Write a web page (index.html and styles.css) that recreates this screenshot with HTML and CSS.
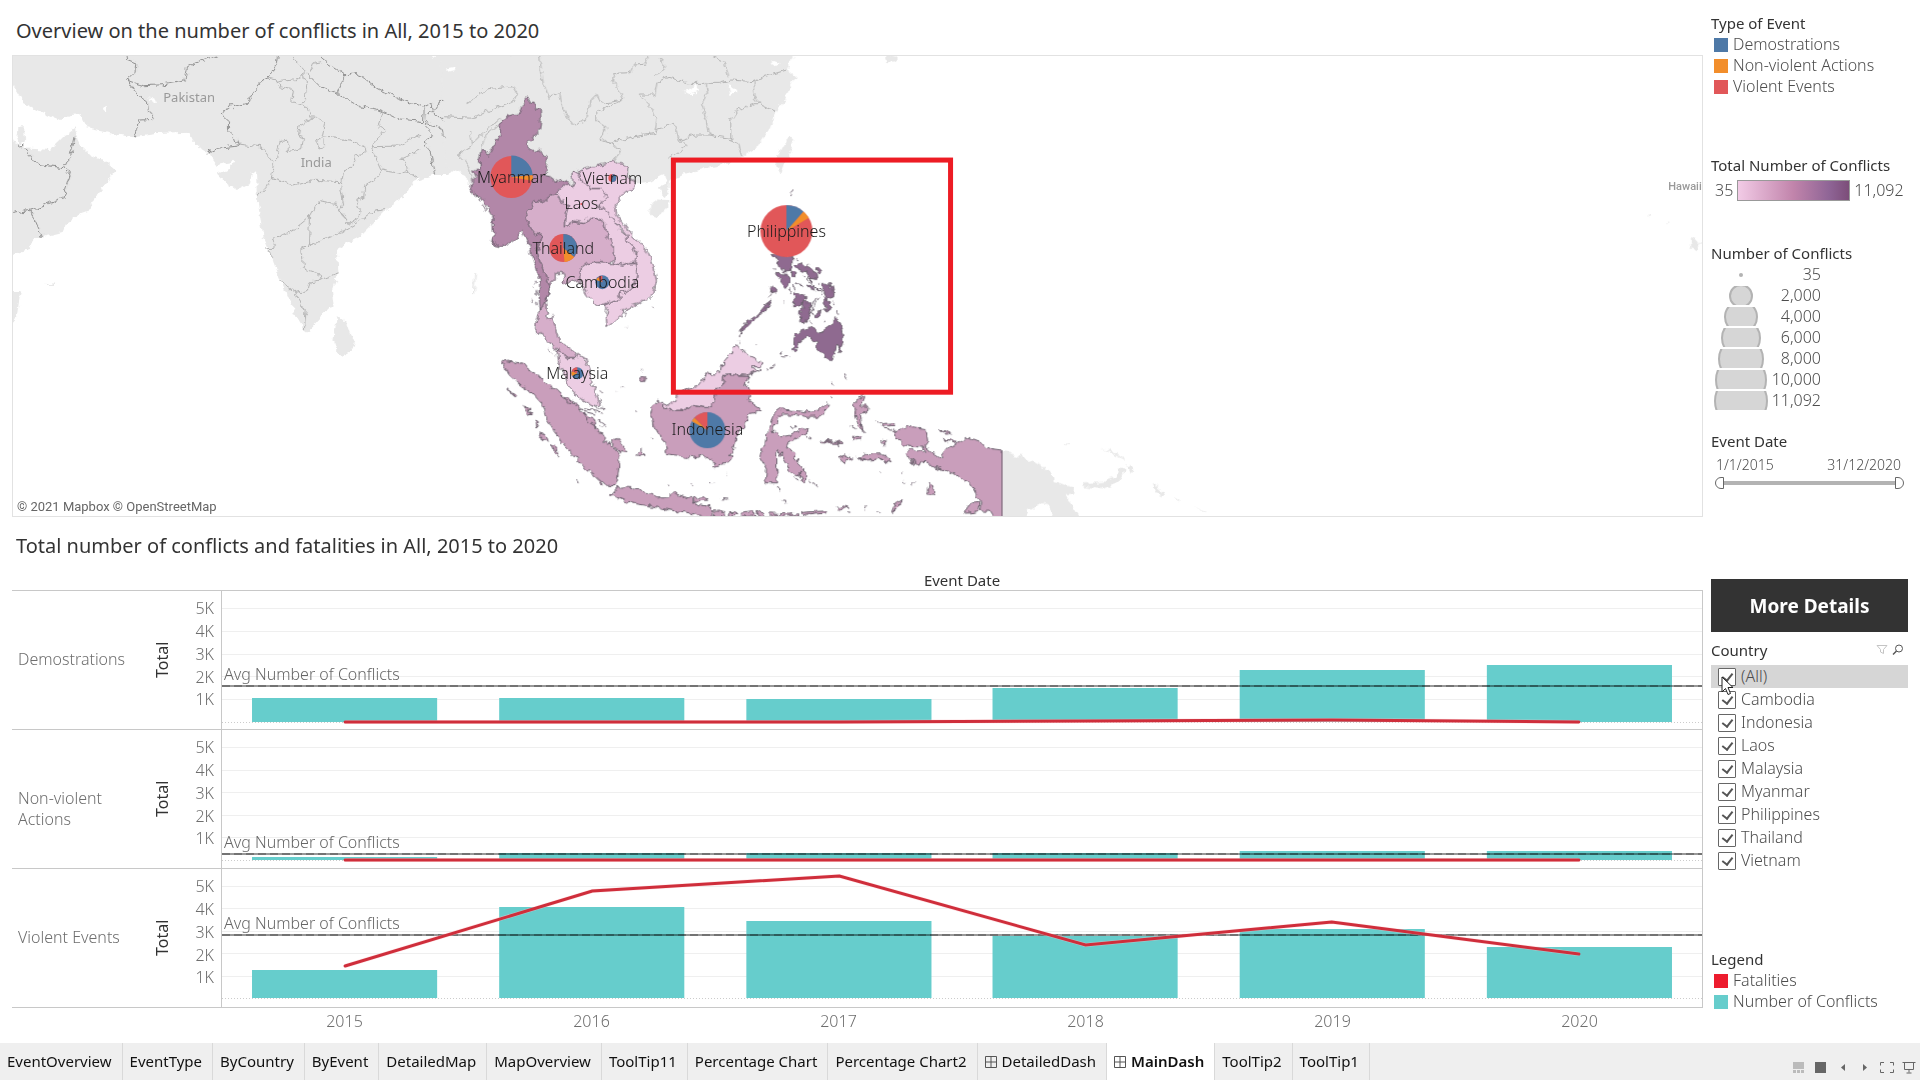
FILE: index.html
```html
<!DOCTYPE html>
<html lang="en">
<head>
<meta charset="utf-8">
<title>MainDash</title>
<link rel="stylesheet" href="styles.css">
</head>

<body>
<main class="dashboard">
  <div class="views">
    <h1>Overview on the number of conflicts in All, 2015 to 2020</h1>

    <!-- map, drawn in dashboard coordinates -->
    <svg class="map" viewBox="13 56 1688 460">
      <defs>
        <filter id="coast" filterUnits="userSpaceOnUse" x="0" y="45" width="1720" height="490" color-interpolation-filters="sRGB">
          <feTurbulence type="fractalNoise" baseFrequency="0.16" numOctaves="2" seed="4"/>
          <feDisplacementMap in="SourceGraphic" scale="7" xChannelSelector="R" yChannelSelector="G"/>
        </filter>
        <clipPath id="papua-border"><rect x="0" y="0" width="1002" height="600"/></clipPath>
      </defs>

      <g filter="url(#coast)">
        <!-- west: Iran, Arabia, India -->
        <g class="land" transform="translate(0 40) scale(.3333)">
          <path d="M20,30 L20,105 37,135 70,190 110,210 180,240 215,222 240,220 262,265 330,280 400,292 470,282 565,278 575,300 600,325 625,340 650,375 700,365 685,385 650,400 680,430 710,450 750,430 755,395 768,398 770,470 790,590 815,650 845,730 890,830 918,877 945,850 985,805 1003,800 998,750 1015,700 1010,630 1040,610 1080,590 1160,510 1220,460 1240,425 1300,405 1340,405 1380,375 1405,430 1450,480 1450,30Z"/>
          <path d="M20,300 L60,312 80,325 150,330 190,290 225,265 235,310 270,345 310,360 345,390 300,455 275,490 272,510 230,525 200,550 190,575 130,590 100,600 90,625 20,650Z"/>
          <path d="M55,265 L72,262 75,300 60,315 52,295ZM20,753 L62,753 50,830 20,870ZM137,730h28v5h-28Z"/>
          <path d="M1010,825 L1040,850 1050,880 1065,900 1055,935 1030,948 1010,935 1000,900Z"/>
          <path class="water" d="M1340,83l25,-5 2,10 -24,5ZM447,172l18,8 -8,10ZM310,205l14,-4 -8,18ZM1290,45l20,0 -8,9Z"/>
        </g>
        <g class="borders" transform="translate(0 40) scale(.3333)">
          <path class="nation" d="M378,45 L380,58 410,70 408,95 380,121 430,137 490,134 555,122 562,80 600,62 650,48M380,121 L410,165 442,185 445,215 460,222 455,238 420,240 410,262 403,292M832,45 L828,75 805,115 790,118 760,155 740,190 700,200 690,190 663,225 685,245 685,270 705,290 715,318 650,325 620,340M963,50 L1000,80 1035,105 1012,160 1080,200 1140,212 1200,240 1270,248 1272,200 1230,188 1180,170 1130,145 1080,105 1060,98 1040,110M920,100 L960,140 1010,160M1272,200 L1293,190 1297,215 1275,222M1300,215 L1320,185 1350,180 1385,190 1402,210 1395,232 1320,235ZM1275,250 L1325,262 1330,290 1405,294 1405,262M1270,255 L1300,285 1270,310 1290,335 1303,403M1405,295 L1405,330 1378,335 1378,360 1395,370 1400,345 1412,345 1415,400"/>
          <path class="nation" d="M75,325 L110,373 193,383 215,335 225,290M193,383 L210,405 188,475 92,510 37,520M92,510 L128,593M50,310l8,8 12,-2"/>
          <path d="M715,312 L780,320 820,370 812,410 800,440 772,470M812,415 L880,435 930,420 1025,425M825,360 L840,305 862,300 865,335 905,325 910,290 895,285 900,255 945,232 975,245 965,290 1050,300 1095,320 1098,340 1060,345 1065,365 1030,400 1022,440 1030,495 1018,510 1048,552 1075,535 1080,510 1070,480 1088,475 1090,440 1130,415 1142,390 1115,330 1120,310 1152,270 1135,255 1150,215M965,290 L950,300 955,325 970,320 968,300M1115,320 L1200,318 1230,300 1260,285M1142,390 L1200,400 1215,390 1252,418M1260,330 L1205,355 1230,400M810,115 L830,120 840,140 880,150 875,185 920,200 930,230 945,232M910,95 L920,130 915,180 905,190M830,125 L880,120 905,110 915,90 875,50M930,95 L940,70 965,65"/>
          <path d="M1160,508 L1115,515 1075,545 1018,580 925,617 928,530 955,482 1005,490 1030,530 1050,550M928,530 L880,570 820,598 818,625 800,625 818,650M925,617 L905,625 910,685 955,700 960,720 930,725 925,750 890,760 840,722M960,718 L1015,698M890,760 L905,800 918,810 912,872M1320,235 L1345,265 1410,262 1425,250M1402,210 L1440,170"/>
        </g>

        <!-- east: China, Taiwan, Hainan -->
        <g class="land" transform="translate(400 40) scale(.4464 .3333)">
          <path d="M90,30 L100,380 165,420 250,480 400,450 480,420 530,430 560,425 590,405 595,425 580,445 590,470 600,455 602,425 640,400 680,385 720,375 765,350 800,320 825,270 840,220 860,180 870,150 885,110 865,90 880,50 870,30Z"/>
          <path d="M870,290 L880,295 868,350 852,402 840,360ZM560,495 L575,478 600,480 600,500 575,535 558,520ZM1085,45 L1112,50 1105,68 1088,66Z"/>
          <path class="water" d="M634,155l15,-4 14,-18 4,18 -18,12ZM735,135l14,8 6,14 -16,8ZM835,62l16,8 -6,12 -14,-8ZM103,85l20,-5 2,10 -20,5ZM70,45h15l-6,10Z"/>
        </g>
        <g class="borders" transform="translate(400 40) scale(.4464 .3333)">
          <path d="M312,50 L320,130 332,175 355,160 362,205 390,255 415,240 425,185 440,165 450,190 500,180 490,145 475,125 480,100 515,98 525,75 550,72 555,50M500,180 L440,215 440,240 460,260 450,290 470,310 525,290 570,280 575,235 560,200 535,165 570,165 575,125 600,112 650,130 685,130 688,160 675,190 685,240 690,285 740,295M570,280 L575,265 610,250 620,275 625,300 660,285 690,285M625,300 L640,320 600,355M740,300 L740,240 755,210 800,190 840,215M690,130 L715,130 740,120 790,125 815,110 865,90M580,50 L592,80 570,110M700,50 L725,65 735,110M790,125 L792,170 805,190M735,300 L755,310 765,350M460,260 L450,300 470,310 495,330 480,360M150,190 L190,150 250,140 262,165 250,185 200,210 165,235 100,230M232,240 L190,290 180,330M225,235 L160,310M155,275 L160,320 130,345 150,370 162,420M245,50 l20,-5"/>
        </g>

        <!-- Papua New Guinea and the Solomons -->
        <g class="land" transform="translate(960 370) scale(.3333)">
          <path d="M100,240 L120,240 200,265 275,305 280,335 340,352 338,372 318,375 335,410 360,450 290,450 260,405 240,400 205,420 190,450 100,450ZM365,340 L430,335 468,320 472,295 495,297 480,330 430,358 365,347ZM420,234 L450,242 490,265 488,268 450,248ZM500,283l16,4 2,18 -8,2ZM575,337 L610,368 605,378 585,365ZM635,375l26,18 -6,2ZM700,405l40,22 -6,1ZM310,220h20v4h-20Z"/>
        </g>
        <path class="land" d="M1648,213l3,2 -3,1ZM1665,220l3,2 -2,1ZM1690,237l6,2 4,5 -5,6 -5,-2ZM474,273l2,0 -2,20 -1,0Z"/>

        <!-- mainland countries -->
        <g class="country" transform="translate(440 80) scale(.3333)">
          <path class="myanmar" d="M262,50 L272,68 280,65 285,82 300,88 302,120 298,150 280,170 262,185 265,205 278,215 300,208 305,225 320,230 318,248 327,275 310,285 330,290 345,302 360,306 378,298 380,308 362,325 345,345 325,350 305,368 282,362 275,380 258,400 262,420 270,440 285,460 305,470 300,490 290,510 298,545 315,580 328,620 325,640 300,690 296,640 300,600 285,560 272,520 268,490 245,455 232,470 215,485 195,498 178,500 152,495 160,470 158,440 158,410 140,380 130,360 105,345 88,322 92,305 108,290 100,275 120,265 118,230 122,212 145,225 152,215 165,190 180,165 180,125 205,108 240,98 250,75 250,60Z"/>
          <path class="thailand" d="M345,345 L358,345 368,370 385,375 378,400 375,440 400,425 430,430 445,412 470,415 495,430 500,470 522,495 522,540 505,550 470,547 440,550 420,565 420,600 415,612 400,600 372,608 370,580 345,580 345,600 335,605 325,640 315,665 318,690 325,718 335,715 350,760 355,785 385,800 405,815 408,835 380,835 375,820 350,810 330,790 310,765 285,755 288,720 300,690 325,640 328,620 315,580 298,545 290,510 300,490 305,470 285,460 270,440 262,420 258,400 275,380 282,362 305,368 325,350Z"/>
          <path class="pale" d="M395,272 L405,275 420,285 420,300 440,310 450,325 480,325 495,340 500,355 485,370 470,378 495,390 510,405 525,425 540,450 560,465 560,485 585,510 590,545 570,548 545,555 525,550 522,540 522,495 500,470 495,430 470,415 445,412 430,430 400,425 375,440 378,400 385,375 368,370 358,345 345,345 362,325 380,308 400,318 395,290Z"/>
          <path class="pale" d="M518,240 L530,250 550,252 562,262 560,290 590,310 580,325 555,335 540,350 525,375 528,400 548,430 570,460 595,485 625,520 640,560 648,600 640,640 620,660 570,680 550,690 545,705 520,725 500,742 498,705 503,685 490,675 515,665 540,660 535,640 560,632 585,610 590,580 585,545 590,515 560,485 560,465 525,425 495,390 470,378 485,370 500,355 495,340 480,325 450,325 440,310 420,300 415,270 440,265 465,258 500,250Z"/>
          <path class="pale" d="M420,565 L440,550 470,547 505,550 522,550 545,555 570,548 585,547 590,580 585,610 560,632 535,640 540,660 515,665 490,675 470,675 455,660 440,645 430,620 418,595Z"/>
          <path class="pale" d="M350,810 L375,820 380,835 408,835 412,822 440,840 450,870 455,910 470,945 480,975 460,980 420,955 385,920 370,880 355,845Z"/>
          <path d="M285,600l3,12M278,620l4,6M290,630l2,14M276,655l3,10M288,665l3,10M110,350l6,12M128,372l10,20M156,480l4,14M168,484l2,14M186,490l3,10M335,705l4,10M545,690l8,12M552,705l6,4M320,808l6,4M605,870l3,2M635,680l2,3M558,740l2,2M332,815l4,4"/>
        </g>
      </g>

      <!-- Indonesia and Borneo, cut straight at the Papua border -->
      <g clip-path="url(#papua-border)">
        <g filter="url(#coast)">
          <g class="country" transform="translate(470 320) scale(.3571 .3333)">
            <path class="indonesia" d="M88,120 L120,125 150,130 165,150 180,155 210,190 240,210 265,235 300,255 310,275 345,300 350,330 375,340 375,365 400,375 418,405 415,450 410,497 375,495 350,470 320,445 290,405 265,380 245,345 215,300 200,250 170,215 140,195 105,160Z"/>
            <path class="indonesia" d="M395,525 L415,500 450,502 490,515 520,530 550,530 565,515 600,530 620,535 630,552 675,560 678,587 640,585 600,575 560,570 520,560 460,550 430,540 405,530ZM625,532l36,-2 2,10 -36,3ZM680,572l30,2 2,12 -30,1ZM725,578l20,-2 4,10 -22,2ZM758,576l30,-4 8,12 -36,4ZM800,574l20,4 4,10 -20,0ZM835,578l60,4 20,-4 2,9 -80,1ZM930,576l70,-4 -2,6 -66,8ZM1022,565l25,-8 10,4 -30,10Z"/>
            <path class="indonesia" d="M525,240 L540,258 560,270 600,270 620,255 660,262 685,250 690,210 710,190 712,165 775,165 770,190 778,205 785,225 780,245 815,270 795,278 775,280 768,320 745,345 740,375 735,400 720,425 682,440 680,418 640,405 600,415 575,405 550,400 545,365 530,345 515,320 508,280 512,255Z"/>
            <path class="indonesia" d="M842,310 L850,280 870,265 900,270 940,275 975,270 1005,248 1000,265 980,290 940,292 900,285 860,285 848,330 870,350 895,345 930,325 950,330 920,350 890,365 885,380 905,395 920,430 935,450 920,465 895,455 885,430 870,405 862,390 858,400 858,440 860,488 828,488 832,450 810,410 815,385 828,375 830,345 838,330ZM920,460l18,-15 4,25 -12,18Z"/>
            <path class="indonesia" d="M1075,245 L1105,225 1100,245 1090,258 1112,258 1108,275 1092,280 1095,310 1100,335 1085,310 1078,280ZM1088,415 L1110,400 1160,402 1178,428 1150,415 1100,422ZM1030,412l20,-8 18,10 -20,16ZM980,360l58,4 2,6 -58,-2ZM1070,348l22,2 0,10 -20,-2ZM1278,525l4,-38 14,10 2,28ZM1145,362l20,4 -8,8ZM1155,310l34,-2 0,8 -30,2ZM1180,578l10,-28 22,-12 -20,30ZM1310,328l34,12 -10,2ZM1320,358l40,2 -4,6Z"/>
            <path class="indonesia" d="M1180,335 L1225,318 1275,325 1280,365 1270,378 1300,405 1315,415 1335,385 1390,352 1430,368 1455,385 1490,390 1520,390 1520,600 1470,600 1450,570 1425,570 1430,545 1415,520 1400,490 1370,470 1320,450 1290,435 1265,420 1255,440 1240,435 1235,415 1215,400 1235,385 1275,400 1265,378 1215,375 1195,350ZM1385,580 L1395,555 1425,545 1420,575Z"/>
            <path class="indonesia" d="M105,210l24,16 -4,4ZM148,258l12,2 12,22 -8,4ZM184,300l8,6 -6,14ZM192,335l12,4 12,22 -8,4ZM228,372l10,4 10,34 -12,-14ZM395,365l20,-10 25,42 -22,-2ZM465,400l12,-10 10,12 -14,8ZM320,285l25,10 4,22 -16,-10ZM265,232l18,4 8,12 -16,-2ZM478,172l10,2 -2,10 -8,-4Z"/>
            <path class="pale" d="M525,240 L555,255 575,248 580,220 600,210 635,200 655,170 665,155 680,170 690,150 700,155 705,130 725,105 745,75 765,90 775,105 822,130 810,140 790,140 805,155 775,165 735,163 712,165 710,190 690,210 685,250 660,262 620,255 600,270 560,270 540,258Z"/>
            <path d="M300,262l70,14M310,272l40,10M355,262l20,4M360,300l20,16M362,320l18,2M365,215l4,2M408,208l4,2M425,197l4,3M462,272l4,2M505,357l6,2M300,482l6,3M553,495l4,1M620,494l4,2M674,487l4,1M716,460l3,2M895,320l22,-4M935,345l20,12M905,470l14,10M950,480l20,20M860,500l2,14M865,540l20,6M1010,187l4,2M1048,160l4,20M1010,230l2,3M1130,305l20,6M1065,315l14,8M1080,410l30,12M700,535l20,2M1050,575l14,1M1105,565l4,-10M1140,575l8,2M1235,495l10,-10M1148,452l3,3M1208,450l2,8M1215,486l4,4M1160,325l22,2M1240,420l6,16M1302,435l14,4M775,170l6,16M770,188l10,8M985,365l44,0 2,16"/>
          </g>
        </g>
      </g>
      <path class="border_line" d="M1001.500,450V516"/>

      <!-- Philippines -->
      <g filter="url(#coast)">
        <g class="country" transform="translate(660 150) scale(.3333)">
          <path class="philippines" d="M335,310 L395,320 395,345 390,365 370,365 355,350 350,330ZM345,370 L380,372 388,395 378,412 365,400ZM405,345 L425,338 445,355 470,370 472,388 450,385 435,362 412,358ZM478,400 L510,398 520,440 500,448 490,425ZM490,440 L510,455 505,485 495,480ZM400,428 L440,440 425,465 400,470ZM430,455 L452,455 448,490 438,518 415,500 415,485 428,480ZM460,490 L485,482 480,497 462,500ZM400,590 L402,560 425,540 445,530 465,540 470,550 490,540 520,520 520,500 540,515 548,570 540,605 530,585 515,632 495,620 470,605 470,575 440,560 420,570 412,590ZM240,545 L255,520 290,495 315,465 335,450 325,470 300,490 275,515 250,540ZM330,410l14,2 -2,16 -10,4ZM393,366l12,4 -2,10 -8,-2ZM440,405l20,4 6,14 -16,-4ZM470,352l10,2 0,14 -12,-4ZM398,592l12,4 -4,8 -8,-2Z"/>
          <path d="M398,118l-3,6M396,130l4,8M399,160l3,2M402,322l12,4M342,355l4,4M425,375l60,55M440,380l50,50M475,440l-28,60M465,440l-20,50M402,395l20,8M400,405l6,20M385,415l4,12M415,400l10,10M525,480l12,14M518,455l6,10M445,350l6,-10M320,440l8,-8M335,425l4,6M240,550l-4,6M238,572l4,10M370,455l2,2M286,584l2,1M365,605l-10,6M362,620l20,-4M330,655l14,-10M320,655l-2,6M300,660l-12,8M557,668l4,10M556,688l4,-6M515,695l4,6M512,740l2,2M595,742l14,-10M425,500l-6,12M450,515l8,6M490,512l0,6"/>
        </g>
      </g>

      <!-- place names of the base map -->
      <text class="place" x="189" y="102">Pakistan</text>
      <text class="place" x="316" y="167">India</text>
      <text class="place small" x="1684" y="190">Hawaii</text>

      <!-- pies: r is half of the pie, the stroke fills it -->
      <g class="pie" transform="translate(511 177) rotate(-90)">
        <circle class="violent" r="21"/>
        <circle class="demo" r="11" stroke-width="21" pathLength="360" stroke-dasharray="85 360"/>
        <circle class="nonviolent" r="11" stroke-width="21" pathLength="360" stroke-dasharray="15 360" stroke-dashoffset="-85"/>
      </g>
      <g class="pie" transform="translate(563 248) rotate(-90)">
        <circle class="violent" r="14"/>
        <circle class="demo" r="7" stroke-width="14" pathLength="360" stroke-dasharray="130 360"/>
        <circle class="nonviolent" r="7" stroke-width="14" pathLength="360" stroke-dasharray="45 360" stroke-dashoffset="-130"/>
      </g>
      <g class="pie" transform="translate(602 282) rotate(-90)">
        <circle class="demo-fill" r="7"/>
        <circle class="nonviolent" r="3" stroke-width="7" pathLength="360" stroke-dasharray="30 360" stroke-dashoffset="-290"/>
        <circle class="red" r="3" stroke-width="7" pathLength="360" stroke-dasharray="40 360" stroke-dashoffset="-320"/>
      </g>
      <g class="pie" transform="translate(612 178) rotate(-90)">
        <circle class="violent" r="4"/>
        <circle class="demo" r="2" stroke-width="4" pathLength="360" stroke-dasharray="200 360"/>
      </g>
      <g class="pie" transform="translate(577 373) rotate(-90)">
        <circle class="demo-fill" r="6"/>
        <circle class="nonviolent" r="3" stroke-width="6" pathLength="360" stroke-dasharray="50 360" stroke-dashoffset="-240"/>
        <circle class="red" r="3" stroke-width="6" pathLength="360" stroke-dasharray="70 360" stroke-dashoffset="-290"/>
      </g>
      <g class="pie" transform="translate(707 430) rotate(-90)">
        <circle class="demo-fill" r="18"/>
        <circle class="nonviolent" r="9" stroke-width="18" pathLength="360" stroke-dasharray="14 360" stroke-dashoffset="-300"/>
        <circle class="red" r="9" stroke-width="18" pathLength="360" stroke-dasharray="46 360" stroke-dashoffset="-314"/>
      </g>
      <g class="pie" transform="translate(786 231) rotate(-90)">
        <circle class="violent" r="26"/>
        <circle class="demo" r="13" stroke-width="26" pathLength="360" stroke-dasharray="41 360"/>
        <circle class="nonviolent" r="13" stroke-width="26" pathLength="360" stroke-dasharray="18 360" stroke-dashoffset="-41"/>
      </g>
      <circle class="violent" cx="581" cy="204" r="1"/>

      <g class="names">
        <text x="511" y="183">Myanmar</text>
        <text x="612" y="184">Vietnam</text>
        <text x="581" y="209">Laos</text>
        <text x="563" y="254">Thailand</text>
        <text x="602" y="288">Cambodia</text>
        <text x="577" y="379">Malaysia</text>
        <text x="707" y="435">Indonesia</text>
        <text x="786" y="237">Philippines</text>
      </g>

      <rect class="highlight" x="673" y="160" width="277" height="232"/>
      <text class="credit" x="17" y="511">© 2021 Mapbox © OpenStreetMap</text>
    </svg>

    <h1 class="second">Total number of conflicts and fatalities in All, 2015 to 2020</h1>
    <h2 class="chart_title">Event Date</h2>

    <div class="chart">
      <div class="chart_row">
        <div class="row_name">Demostrations</div>
        <div class="row_total">Total</div>
        <div class="row_axis"><span>5K</span><span>4K</span><span>3K</span><span>2K</span><span>1K</span></div>
        <div class="plot">
          <svg viewBox="0 0 1479 138" preserveAspectRatio="none">
            <path class="gridline" d="M0,17.5H1481M0,40.5H1481M0,63.5H1481M0,85.5H1481M0,108.5H1481"/>
            <path class="zero" d="M0,131.5H1481"/>
            <path class="bar" d="M30,107h185v24h-185ZM277,107h185v24h-185ZM524,108h185v23h-185ZM770,97h185v34h-185ZM1017,79h185v52h-185ZM1264,74h185v57h-185Z"/>
            <path class="avg" d="M0,95H1481"/><path class="avg_dash" d="M0,95H1481"/>
            <polyline class="halo" points="123,131 370,131 617,131 863,130 1109,129 1356,131"/>
            <polyline class="fatal" points="123,131 370,131 617,131 863,130 1109,129 1356,131"/>
          </svg>
          <span class="avg_label" style="bottom: 44px">Avg Number of Conflicts</span>
        </div>
      </div>
      <div class="chart_row">
        <div class="row_name">Non-violent Actions</div>
        <div class="row_total">Total</div>
        <div class="row_axis"><span>5K</span><span>4K</span><span>3K</span><span>2K</span><span>1K</span></div>
        <div class="plot">
          <svg viewBox="0 0 1479 138" preserveAspectRatio="none">
            <path class="gridline" d="M0,17.5H1481M0,40.5H1481M0,62.5H1481M0,85.5H1481M0,107.5H1481"/>
            <path class="zero" d="M0,130.5H1481"/>
            <path class="bar" d="M30,127h185v3h-185ZM277,123h185v7h-185ZM524,123h185v7h-185ZM770,123h185v7h-185ZM1017,121h185v9h-185ZM1264,121h185v9h-185Z"/>
            <path class="avg" d="M0,124H1481"/><path class="avg_dash" d="M0,124H1481"/>
            <polyline class="halo" points="123,130 1356,130"/>
            <polyline class="fatal" points="123,130 1356,130"/>
          </svg>
          <span class="avg_label" style="bottom: 15px">Avg Number of Conflicts</span>
        </div>
      </div>
      <div class="chart_row">
        <div class="row_name">Violent Events</div>
        <div class="row_total">Total</div>
        <div class="row_axis"><span>5K</span><span>4K</span><span>3K</span><span>2K</span><span>1K</span></div>
        <div class="plot">
          <svg viewBox="0 0 1479 138" preserveAspectRatio="none">
            <path class="gridline" d="M0,17.5H1481M0,39.5H1481M0,62.5H1481M0,84.5H1481M0,107.5H1481"/>
            <path class="zero" d="M0,129.5H1481"/>
            <path class="bar" d="M30,101h185v28h-185ZM277,38h185v91h-185ZM524,52h185v77h-185ZM770,67h185v62h-185ZM1017,60h185v69h-185ZM1264,78h185v51h-185Z"/>
            <path class="avg" d="M0,66H1481"/><path class="avg_dash" d="M0,66H1481"/>
            <polyline class="halo" points="123,97 370,22 617,7 863,76 1109,53 1356,85"/>
            <polyline class="fatal" points="123,97 370,22 617,7 863,76 1109,53 1356,85"/>
          </svg>
          <span class="avg_label" style="bottom: 73px">Avg Number of Conflicts</span>
        </div>
      </div>
      <div class="years">
        <span>2015</span><span>2016</span><span>2017</span><span>2018</span><span>2019</span><span>2020</span>
      </div>
    </div>
  </div>

  <aside class="side">
    <section class="event_type">
      <h2>Type of Event</h2>
      <ul class="legend">
        <li><i class="swatch blue"></i>Demostrations</li>
        <li><i class="swatch orange"></i>Non-violent Actions</li>
        <li><i class="swatch coral"></i>Violent Events</li>
      </ul>
    </section>

    <section class="total_scale">
      <h2>Total Number of Conflicts</h2>
      <div class="ramp"><span>35</span><i></i><span>11,092</span></div>
    </section>

    <section class="sizes">
      <h2>Number of Conflicts</h2>
      <ul>
        <li><svg viewBox="-30 -10 60 19"><circle class="dot" r="2"/></svg><span>35</span></li>
        <li><svg viewBox="-30 -10 60 19"><circle r="11"/></svg><span>2,000</span></li>
        <li><svg viewBox="-30 -10 60 19"><circle r="16"/></svg><span>4,000</span></li>
        <li><svg viewBox="-30 -10 60 19"><circle r="19"/></svg><span>6,000</span></li>
        <li><svg viewBox="-30 -10 60 19"><circle r="22"/></svg><span>8,000</span></li>
        <li><svg viewBox="-30 -10 60 19"><circle r="25"/></svg><span>10,000</span></li>
        <li><svg viewBox="-30 -10 60 19"><circle r="26"/></svg><span>11,092</span></li>
      </ul>
    </section>

    <section class="dates">
      <h2>Event Date</h2>
      <div class="date_ends"><label for="date-from">1/1/2015</label><label for="date-to">31/12/2020</label></div>
      <div class="slider">
        <input id="date-from" class="from" type="range" min="0" max="100" value="0">
        <input id="date-to" class="to" type="range" min="0" max="100" value="100">
      </div>
    </section>

    <button class="more" type="button">More Details</button>

    <section class="country_filter">
      <div class="filter_head">
        <h2>Country</h2>
        <button type="button" aria-label="Clear filter"><svg width="12" height="12" viewBox="0 0 12 12"><path d="M1,1.5H11L7.5,5.5V9.5L4.5,8V5.5Z" fill="none" stroke="#c4c4c4"/></svg></button>
        <button type="button" aria-label="Search"><svg width="12" height="12" viewBox="0 0 12 12"><circle cx="7" cy="4.5" r="3.5" fill="none" stroke="#555"/><path d="M4.5,7L1,10.5" stroke="#555" stroke-width="1.5"/></svg></button>
      </div>
      <label class="over"><input type="checkbox" checked>(All)
        <svg class="cursor" width="14" height="20" viewBox="0 0 14 20"><path d="M1,1V16L4.5,12.5 7,18.5 9.5,17.5 7,11.5H12Z" fill="#fff" stroke="#222"/></svg>
      </label>
      <label><input type="checkbox" checked>Cambodia</label>
      <label><input type="checkbox" checked>Indonesia</label>
      <label><input type="checkbox" checked>Laos</label>
      <label><input type="checkbox" checked>Malaysia</label>
      <label><input type="checkbox" checked>Myanmar</label>
      <label><input type="checkbox" checked>Philippines</label>
      <label><input type="checkbox" checked>Thailand</label>
      <label><input type="checkbox" checked>Vietnam</label>
    </section>

    <section class="chart_legend">
      <h2>Legend</h2>
      <ul class="legend">
        <li><i class="swatch red_line"></i>Fatalities</li>
        <li><i class="swatch teal"></i>Number of Conflicts</li>
      </ul>
    </section>
  </aside>
</main>

<nav class="tabs">
  <a href="#">EventOverview</a>
  <a href="#">EventType</a>
  <a href="#">ByCountry</a>
  <a href="#">ByEvent</a>
  <a href="#">DetailedMap</a>
  <a href="#">MapOverview</a>
  <a href="#">ToolTip11</a>
  <a href="#">Percentage Chart</a>
  <a href="#">Percentage Chart2</a>
  <a href="#"><svg width="12" height="12" viewBox="0 0 12 12"><path d="M.5,.5H11.5V11.5H.5ZM6,.5V11.5M.5,6H11.5"/></svg>DetailedDash</a>
  <a href="#" class="active"><svg width="12" height="12" viewBox="0 0 12 12"><path d="M.5,.5H11.5V11.5H.5ZM6,.5V11.5M.5,6H11.5"/></svg>MainDash</a>
  <a href="#">ToolTip2</a>
  <a href="#">ToolTip1</a>
  <div class="tools">
    <button type="button" aria-label="Show filmstrip"><svg width="14" height="14" viewBox="0 0 14 14"><path fill="#bbb" d="M1,1H12V8H1ZM1,9H4V12H1ZM5,9H8V12H5ZM9,9H12V12H9Z"/></svg></button>
    <button type="button" aria-label="Show tabs"><svg width="14" height="14" viewBox="0 0 14 14"><path fill="#666" d="M1,1H12V12H1Z"/></svg></button>
    <button type="button" aria-label="Previous"><svg width="14" height="14" viewBox="0 0 14 14"><path fill="#666" d="M9,3V10L5,6.5Z"/></svg></button>
    <button type="button" aria-label="Next"><svg width="14" height="14" viewBox="0 0 14 14"><path fill="#666" d="M5,3V10L9,6.5Z"/></svg></button>
    <button type="button" aria-label="Full screen"><svg width="14" height="14" viewBox="0 0 14 14"><path fill="none" stroke="#666" d="M4,1.5H.5V4.5M10,1.5H13.5V4.5M.5,8.5V11.5H4M13.5,8.5V11.5H10"/></svg></button>
    <button type="button" aria-label="Presentation"><svg width="14" height="14" viewBox="0 0 14 14"><path fill="none" stroke="#666" d="M.5,1.5H13.5M2.5,2V8.5H11.5V2M7,8.5V11.5M4.5,12H9.5"/></svg></button>
  </div>
</nav>
</body>
</html>
```

FILE: styles.css
```css
* {
  box-sizing: border-box;
}
body {
  margin: 0;
  min-height: 100vh;
  display: flex;
  flex-direction: column;
  background: #fff;
  color: #4d4d4d;
  font-family: "Noto Sans", sans-serif;
  font-size: 16px;
  line-height: 21px;
  font-weight: 300;
}
h1, h2, ul {
  margin: 0;
  padding: 0;
}
ul {
  list-style: none;
}
h1 {
  height: 55px;
  padding: 17px 4px 0;
  font-size: 20px;
  line-height: 28px;
  font-weight: 400;
  color: #333;
}
h1.second {
  height: 54px;
  padding-top: 15px;
}
h2 {
  font-size: 15px;
  line-height: 22px;
  font-weight: 400;
  color: #333;
}
button {
  font-family: inherit;
  border: 0;
  padding: 0;
  background: none;
}
.dashboard {
  flex: 1;
  display: grid;
  grid-template-columns: 1fr 197px;
  column-gap: 8px;
  padding: 0 12px;
}

/* map */
.map {
  display: block;
  width: 100%;
  border: 1px solid #e2e2e2;
  background: #fff;
}
.land {
  fill: #e8e8e8;
}
.water {
  fill: #fff;
}
.borders path {
  fill: none;
  stroke: #b4b4b4;
  stroke-width: 1;
  vector-effect: non-scaling-stroke;
}
.borders .nation {
  stroke: #909090;
}
.country path {
  fill: none;
  stroke: #6b5f6d;
  stroke-width: 1;
  vector-effect: non-scaling-stroke;
}
.border_line {
  stroke: #6b5f6d;
}
.country .myanmar { fill: #b287a8; }
.country .thailand { fill: #d6aeca; }
.country .pale { fill: #eccde3; }
.country .indonesia { fill: #c99ebb; }
.country .philippines { fill: #8f6a90; }
.pie circle { fill: none; }
.pie .violent, .violent { fill: #e15759; }
.pie .demo-fill { fill: #4e79a7; }
.demo { stroke: #4e79a7; }
.nonviolent { stroke: #f28e2b; }
.red { stroke: #e15759; }
.names {
  fill: #1b1b1b;
  font-size: 16px;
  text-anchor: middle;
}
.place {
  fill: #999;
  font-size: 13px;
  font-weight: 400;
  text-anchor: middle;
}
.place.small {
  font-family: Roboto, sans-serif;
  font-size: 11px;
  font-weight: 500;
}
.highlight {
  fill: none;
  stroke: #ed1c24;
  stroke-width: 5;
}
.credit {
  font-family: Roboto, sans-serif;
  font-size: 13px;
  font-weight: 400;
  fill: #666;
}

/* bar charts */
.chart_title {
  padding-left: 209px;
  text-align: center;
  height: 19px;
  line-height: 19px;
}
.chart_row {
  display: grid;
  grid-template-columns: 120px 60px 29px 1fr;
  height: 139px;
  border-top: 1px solid #c8c8c8;
}
.row_name {
  padding: 58px 0 0 6px;
  color: #6e6e6e;
}
.row_total {
  writing-mode: vertical-rl;
  transform: rotate(180deg);
  justify-self: center;
  text-align: center;
  color: #333;
  font-weight: 400;
}
.row_axis {
  display: flex;
  flex-direction: column;
  height: 119px;
  padding: 7px 7px 0 0;
  justify-content: space-between;
  text-align: right;
  color: #6e6e6e;
}
.plot {
  position: relative;
  border-left: 1px solid #c8c8c8;
  border-right: 1px solid #c8c8c8;
}
.plot svg {
  display: block;
  width: 100%;
  height: 138px;
}
.plot path, .plot polyline {
  fill: none;
  vector-effect: non-scaling-stroke;
}
.gridline { stroke: #efefef; }
.zero {
  stroke: #ccc;
  stroke-dasharray: 1 2;
}
.plot .bar { fill: #66cdcc; }
.avg {
  stroke: rgba(0, 0, 0, 0.4);
  stroke-width: 2;
}
.avg_dash {
  stroke: rgba(0, 0, 0, 0.25);
  stroke-width: 2;
  stroke-dasharray: 8 4;
}
.halo {
  stroke: rgba(255, 200, 205, 0.5);
  stroke-width: 4;
}
.fatal {
  stroke: #cf2e3b;
  stroke-width: 3;
  stroke-linecap: round;
}
.avg_label {
  position: absolute;
  left: 2px;
  color: #666;
}
.years {
  display: grid;
  grid-template-columns: repeat(6, 1fr);
  margin-left: 209px;
  border-top: 1px solid #c8c8c8;
  text-align: center;
  line-height: 27px;
  color: #6e6e6e;
}
.chart {
  background: linear-gradient(#c8c8c8, #c8c8c8) 0 417px / 209px 1px no-repeat;
}

/* right column */
.side {
  display: flex;
  flex-direction: column;
}
.event_type { padding-top: 12px; }
.legend li {
  display: flex;
  align-items: center;
  padding-left: 3px;
}
.swatch {
  width: 14px;
  height: 14px;
  margin-right: 5px;
}
.blue { background: #4e79a7; }
.orange { background: #f28e2b; }
.coral { background: #e15759; }
.red_line { background: #ed1c2e; }
.teal { background: #66cdcc; }
.total_scale { padding-top: 57px; }
.ramp {
  display: flex;
  align-items: center;
  gap: 4px;
  height: 28px;
  padding-left: 4px;
}
.ramp i {
  width: 113px;
  height: 21px;
  border: 1px solid #999;
  background: linear-gradient(90deg, #f2cbe6, #c184ab 50%, #8f6596 82%, #7c4d79);
}
.sizes { padding-top: 38px; }
.sizes li {
  display: flex;
  justify-content: space-between;
  align-items: center;
  width: 110px;
}
.sizes svg {
  flex: none;
  width: 60px;
  height: 19px;
  overflow: hidden;
}
.sizes circle {
  fill: #d6d6d6;
  stroke: #b3b3b3;
  stroke-width: 2;
}
.sizes .dot {
  fill: #b3b3b3;
  stroke: none;
}
.dates { padding-top: 19px; }
.date_ends {
  display: flex;
  justify-content: space-between;
  padding: 2px 7px 0 5px;
  font-size: 14px;
}
.slider {
  position: relative;
  height: 16px;
  margin: 0 4px;
  background: linear-gradient(#b3b3b3, #b3b3b3) 8px 6px / 173px 4px no-repeat;
}
.slider input {
  position: absolute;
  left: 0;
  top: 0;
  width: 100%;
  height: 16px;
  margin: 0;
  appearance: none;
  background: none;
  pointer-events: none;
}
.slider input::-webkit-slider-thumb {
  appearance: none;
  width: 9px;
  height: 12px;
  background: #fff;
  border: 1px solid #666;
  pointer-events: auto;
}
.slider .from::-webkit-slider-thumb { border-radius: 6px 0 0 6px; }
.slider .to::-webkit-slider-thumb { border-radius: 0 6px 6px 0; }
.more {
  flex: none;
  height: 53px;
  margin-top: 88px;
  background: #333;
  color: #fff;
  font-size: 19px;
  font-weight: 700;
}
.country_filter { padding-top: 5px; }
.filter_head {
  display: flex;
  align-items: center;
  gap: 4px;
  height: 26px;
  margin-bottom: 2px;
  padding-right: 4px;
}
.filter_head h2 { flex: 1; }
.filter_head button {
  width: 12px;
  height: 12px;
  line-height: 0;
}
.country_filter label {
  position: relative;
  display: flex;
  align-items: center;
  gap: 5px;
  height: 23px;
  padding-left: 7px;
}
.country_filter .over { background: #d6d6d6; }
.country_filter input {
  appearance: none;
  width: 18px;
  height: 18px;
  margin: 0;
  border: 1px solid #666;
  border-radius: 1px;
  background: #fff;
}
.country_filter input:checked::after {
  content: "";
  display: block;
  width: 5px;
  height: 8px;
  margin: 2px 0 0 5px;
  border: solid #555;
  border-width: 0 2px 2px 0;
  transform: rotate(38deg);
}
.cursor {
  position: absolute;
  left: 10px;
  top: 11px;
  z-index: 1;
}
.chart_legend { padding-top: 76px; }

/* sheet tabs */
.tabs {
  display: flex;
  height: 37px;
  background: #efefef;
  font-size: 15px;
  font-weight: 400;
}
.tabs a {
  display: flex;
  align-items: center;
  gap: 5px;
  padding: 0 10px 0 7px;
  border-right: 1px solid #d9d9d9;
  color: #111;
  text-decoration: none;
}
.tabs a svg {
  fill: none;
  stroke: #555;
}
.tabs .active {
  background: #fff;
  font-weight: 600;
}
.tools {
  display: flex;
  align-items: center;
  gap: 8px;
  margin-left: auto;
  padding: 12px 4px 0 0;
}
.tools button {
  width: 14px;
  height: 14px;
  line-height: 0;
}
```
